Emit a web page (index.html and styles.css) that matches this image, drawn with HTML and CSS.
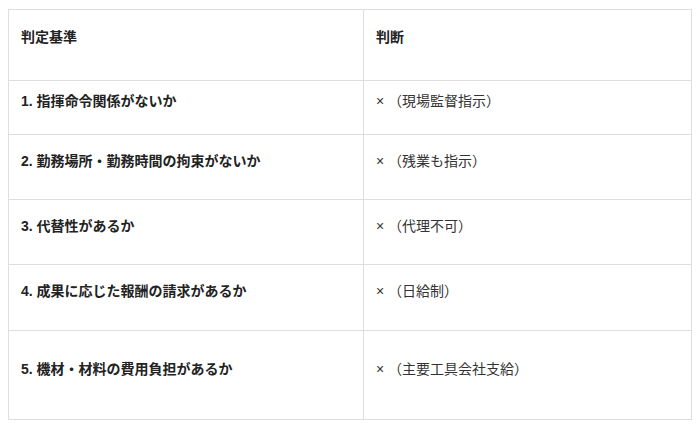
FILE: index.html
```html
<!DOCTYPE html>
<html lang="ja">
<head>
<meta charset="utf-8">
<link rel="stylesheet" href="styles.css">
</head>
<body>
<table class="criteria">
  <tr class="row-head">
    <th class="col-a">判定基準</th>
    <th class="col-b">判断</th>
  </tr>
  <tr class="row-1">
    <td class="col-a">1. 指揮命令関係がないか</td>
    <td class="col-b">× （現場監督指示）</td>
  </tr>
  <tr class="row-2">
    <td class="col-a">2. 勤務場所・勤務時間の拘束がないか</td>
    <td class="col-b">× （残業も指示）</td>
  </tr>
  <tr class="row-3">
    <td class="col-a">3. 代替性があるか</td>
    <td class="col-b">× （代理不可）</td>
  </tr>
  <tr class="row-4">
    <td class="col-a">4. 成果に応じた報酬の請求があるか</td>
    <td class="col-b">× （日給制）</td>
  </tr>
  <tr class="row-5">
    <td class="col-a">5. 機材・材料の費用負担があるか</td>
    <td class="col-b">× （主要工具会社支給）</td>
  </tr>
</table>
</body>
</html>
```

FILE: styles.css
```css
html, body {
  margin: 0;
  padding: 0;
  background: #ffffff;
}
body {
  padding: 9px 0 0 8px;
  font-family: "Liberation Sans", "Noto Sans CJK JP", sans-serif;
  color: #222222;
}
.criteria {
  border-collapse: collapse;
  width: 684px;
  table-layout: fixed;
}
.criteria th,
.criteria td {
  border: 1px solid #dedede;
  text-align: left;
  vertical-align: top;
  padding: 0 12px;
  font-size: 14px;
  line-height: 20px;
  box-sizing: border-box;
}
.criteria .col-a {
  width: 355px;
  font-weight: 700;
}
.criteria th.col-b {
  font-weight: 700;
}
.criteria td.col-b {
  font-weight: 400;
  color: #333333;
}
.row-head th { height: 71px; padding-top: 17px; }
.row-1 td { height: 54px; padding-top: 10px; }
.row-2 td { height: 65px; padding-top: 16px; }
.row-3 td { height: 65px; padding-top: 16px; }
.row-4 td { height: 66px; padding-top: 16px; }
.row-5 td { height: 89px; padding-top: 28px; }
```
